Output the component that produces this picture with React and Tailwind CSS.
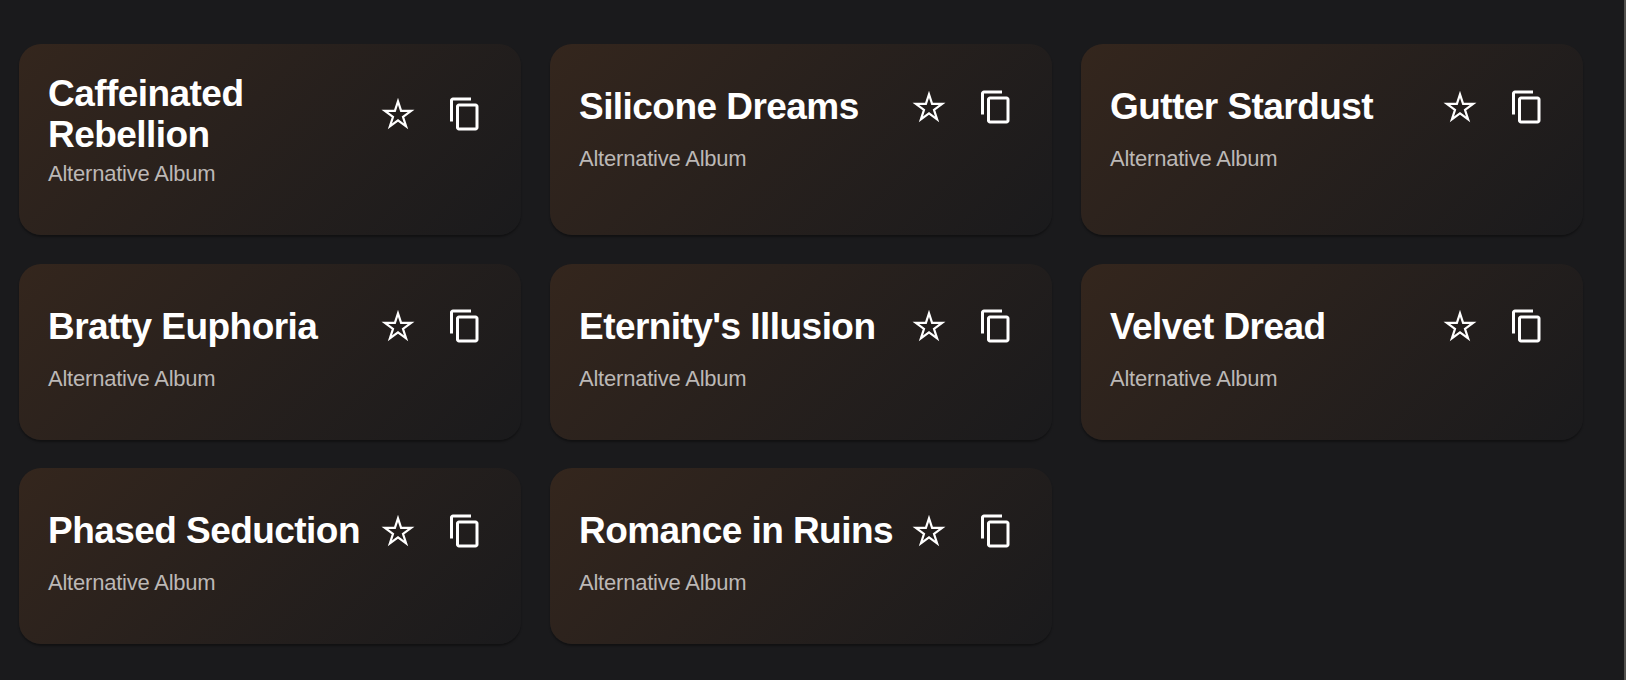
import React from "react";

const albums = [
  "Caffeinated Rebellion",
  "Silicone Dreams",
  "Gutter Stardust",
  "Bratty Euphoria",
  "Eternity's Illusion",
  "Velvet Dread",
  "Phased Seduction",
  "Romance in Ruins",
];

function StarIcon() {
  return (
    <svg width="36" height="36" viewBox="0 0 36 36" fill="none" stroke="currentColor" strokeWidth="2.2">
      <path d="M18 5.4l3.1 9.5h10l-8.1 5.9 3.1 9.5-8.1-5.9-8.1 5.9 3.1-9.5-8.1-5.9h10z" />
    </svg>
  );
}

function CopyIcon() {
  return (
    <svg width="36" height="36" viewBox="0 0 24 24" fill="currentColor">
      <path d="M16 1H4c-1.1 0-2 .9-2 2v14h2V3h12V1zm3 4H8c-1.1 0-2 .9-2 2v14c0 1.1.9 2 2 2h11c1.1 0 2-.9 2-2V7c0-1.1-.9-2-2-2zm0 16H8V7h11v14z" />
    </svg>
  );
}

function AlbumCard({ title }) {
  return (
    <div className="rounded-[22px] bg-linear-135 from-[#34261d] to-[#1a1a1c] px-[29px] pt-[29px] shadow-[0_2px_2px_rgba(0,0,0,0.35)]">
      <div className="flex min-h-[67px] items-center justify-between">
        <h2 className="text-[37px] leading-[41px] font-bold tracking-[-0.55px] text-white">{title}</h2>
        <div className="flex shrink-0 gap-[31px] pr-[9px] text-white">
          <button>
            <StarIcon />
          </button>
          <button>
            <CopyIcon />
          </button>
        </div>
      </div>
      <p className="text-[22px] leading-[38px] tracking-[-0.22px] text-[#bcb8b6]">Alternative Album</p>
    </div>
  );
}

export default function App() {
  return (
    <div className="h-[680px] overflow-hidden border-r-2 border-[#52504d] bg-[#1a1a1c] pt-11 pl-[19px] font-['Liberation_Sans',Arial,sans-serif]">
      <div className="grid w-[1564px] grid-cols-3 grid-rows-[191px_176px_176px] gap-x-[29px] gap-y-[28.5px]">
        {albums.map((title) => (
          <AlbumCard key={title} title={title} />
        ))}
      </div>
    </div>
  );
}
